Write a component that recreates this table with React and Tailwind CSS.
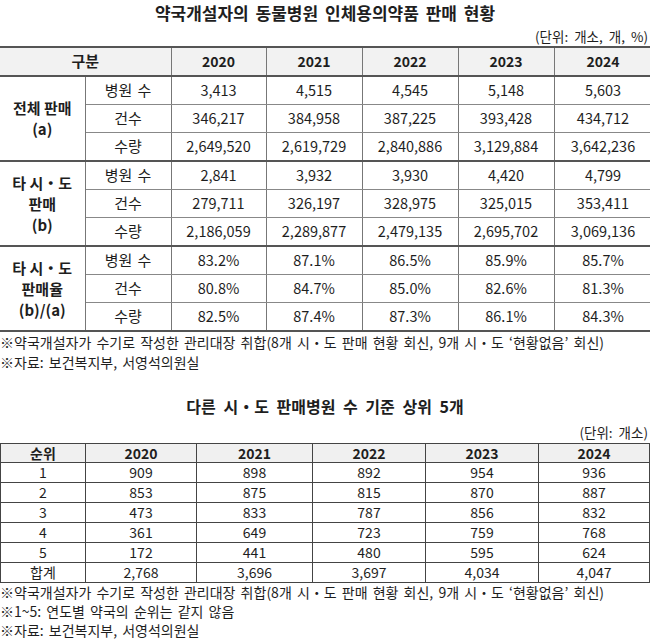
const groups = [
  {
    label: ["전체 판매", "(a)"],
    rows: [
      ["병원 수", "3,413", "4,515", "4,545", "5,148", "5,603"],
      ["건수", "346,217", "384,958", "387,225", "393,428", "434,712"],
      ["수량", "2,649,520", "2,619,729", "2,840,886", "3,129,884", "3,642,236"],
    ],
  },
  {
    label: ["타 시・도", "판매", "(b)"],
    rows: [
      ["병원 수", "2,841", "3,932", "3,930", "4,420", "4,799"],
      ["건수", "279,711", "326,197", "328,975", "325,015", "353,411"],
      ["수량", "2,186,059", "2,289,877", "2,479,135", "2,695,702", "3,069,136"],
    ],
  },
  {
    label: ["타 시・도", "판매율", "(b)/(a)"],
    rows: [
      ["병원 수", "83.2%", "87.1%", "86.5%", "85.9%", "85.7%"],
      ["건수", "80.8%", "84.7%", "85.0%", "82.6%", "81.3%"],
      ["수량", "82.5%", "87.4%", "87.3%", "86.1%", "84.3%"],
    ],
  },
];

const ranks = [
  ["1", "909", "898", "892", "954", "936"],
  ["2", "853", "875", "815", "870", "887"],
  ["3", "473", "833", "787", "856", "832"],
  ["4", "361", "649", "723", "759", "768"],
  ["5", "172", "441", "480", "595", "624"],
  ["합계", "2,768", "3,696", "3,697", "4,034", "4,047"],
];

const years = ["2020", "2021", "2022", "2023", "2024"];

function SalesTable() {
  return (
    <div className="w-[650px] overflow-hidden">
      <table className="table-fixed border-collapse w-[652px] text-center">
        <colgroup>
          <col className="w-[85px]" />
          <col className="w-[86px]" />
          <col className="w-[95px]" />
          <col className="w-[96px]" />
          <col className="w-[96px]" />
          <col className="w-[96px]" />
          <col className="w-[98px]" />
        </colgroup>
        <thead>
          <tr className="h-[29px] bg-[#f2f2f2] border-t-2 border-t-[#555]">
            <th colSpan={2} className="border-b-2 border-b-[#555] border-r border-r-[#777] font-bold text-[15px]">
              구분
            </th>
            {years.map((y) => (
              <th key={y} className="border-b-2 border-b-[#555] border-r border-r-[#777] font-bold text-[14px]">
                {y}
              </th>
            ))}
          </tr>
        </thead>
        <tbody>
          {groups.map((g, gi) =>
            g.rows.map((r, ri) => (
              <tr key={gi + "-" + ri} className="h-[28.3px]">
                {ri === 0 && (
                  <td
                    rowSpan={3}
                    className="border-r border-r-[#777] border-b-2 border-b-[#555] font-bold text-[15px] leading-[21px]"
                  >
                    {g.label.map((l) => (
                      <div key={l}>{l}</div>
                    ))}
                  </td>
                )}
                {r.map((c, ci) => (
                  <td
                    key={ci}
                    className={
                      (ci === 0 ? "text-[15px] [word-spacing:2px] " : "text-[14.5px] ") +
                      "leading-[20px] border-r border-r-[#777] " +
                      (ri === 2 ? "border-b-2 border-b-[#555]" : "border-b border-b-[#888]")
                    }
                  >
                    {c}
                  </td>
                ))}
              </tr>
            ))
          )}
        </tbody>
      </table>
    </div>
  );
}

function RankTable() {
  return (
    <table className="table-fixed border-collapse w-[649px] text-center text-[14px]">
      <colgroup>
        <col className="w-[85px]" />
        <col className="w-[111px]" />
        <col className="w-[116px]" />
        <col className="w-[113px]" />
        <col className="w-[113px]" />
        <col className="w-[111px]" />
      </colgroup>
      <thead>
        <tr className="h-[19px] bg-[#f0f0f0]">
          <th className="border border-[#444] font-bold leading-[16px]">순위</th>
          {years.map((y) => (
            <th key={y} className="border border-[#444] font-bold leading-[16px]">
              {y}
            </th>
          ))}
        </tr>
      </thead>
      <tbody>
        {ranks.map((r) => (
          <tr key={r[0]} className="h-[20px]">
            {r.map((c, ci) => (
              <td key={ci} className="border border-[#444] leading-[16px]">
                {c}
              </td>
            ))}
          </tr>
        ))}
      </tbody>
    </table>
  );
}

export default function App() {
  return (
    <div className="w-[650px] h-[642px] bg-white text-[#1e1e1e] font-['Noto_Sans_CJK_KR','Noto_Sans',sans-serif] overflow-hidden">
      <div className="h-[26px] flex items-center justify-center text-[17px] font-bold [word-spacing:3px]">
        약국개설자의 동물병원 인체용의약품 판매 현황
      </div>
      <div className="h-[20px] flex items-center justify-end text-[13.5px] [word-spacing:3px] pr-[2px]">
        (단위: 개소, 개, %)
      </div>

      <SalesTable />

      <div className="text-[14px] leading-[20px] [word-spacing:2px]">
        <div>※약국개설자가 수기로 작성한 관리대장 취합(8개 시・도 판매 현황 회신, 9개 시・도 ‘현황없음’ 회신)</div>
        <div>※자료: 보건복지부, 서영석의원실</div>
      </div>

      <div className="mt-[22px] h-[24px] flex items-center justify-center text-[16px] font-bold [word-spacing:4px]">
        다른 시・도 판매병원 수 기준 상위 5개
      </div>
      <div className="h-[20px] mt-[4px] flex items-center justify-end text-[13.5px] [word-spacing:3px] pr-[2px]">
        (단위: 개소)
      </div>

      <div className="mt-[1px]">
        <RankTable />
      </div>

      <div className="text-[14px] leading-[19px] [word-spacing:2px]">
        <div>※약국개설자가 수기로 작성한 관리대장 취합(8개 시・도 판매 현황 회신, 9개 시・도 ‘현황없음’ 회신)</div>
        <div>※1~5: 연도별 약국의 순위는 같지 않음</div>
        <div>※자료: 보건복지부, 서영석의원실</div>
      </div>
    </div>
  );
}
